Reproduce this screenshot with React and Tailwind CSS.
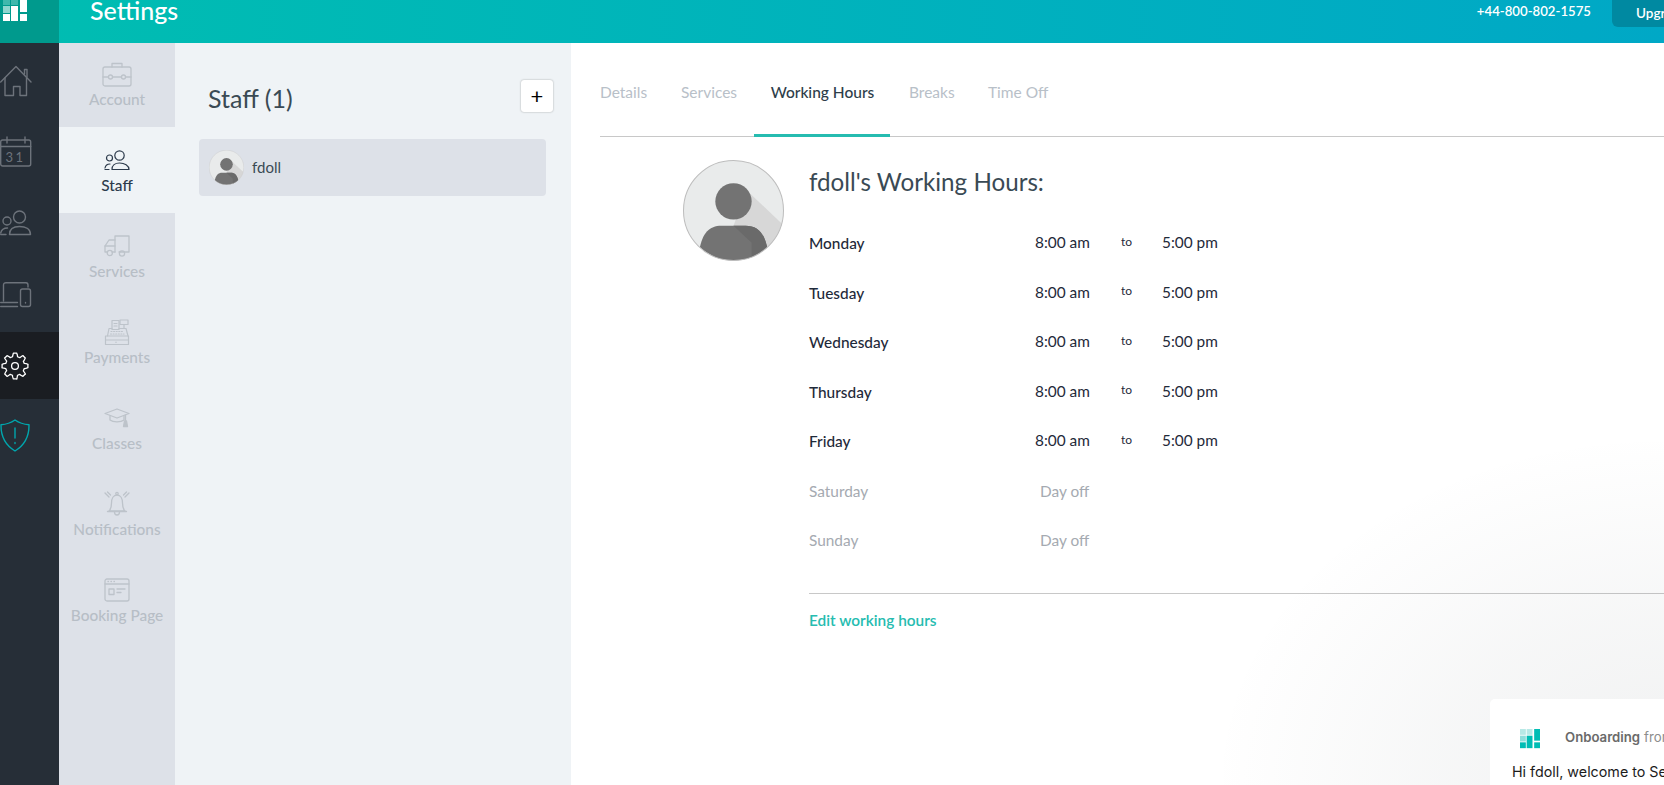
import React from "react";

const gearPath = (cx, cy, R, r, n) => {
  let d = "";
  for (let i = 0; i < n; i++) {
    const a = (i * 2 * Math.PI) / n - Math.PI / 2;
    const s = (2 * Math.PI) / n;
    const pts = [
      [R, a - s * 0.16],
      [R, a + s * 0.16],
      [r, a + s * 0.34],
      [r, a + s * 0.66],
    ];
    pts.forEach(([rad, t], j) => {
      const x = (cx + rad * Math.cos(t)).toFixed(2);
      const y = (cy + rad * Math.sin(t)).toFixed(2);
      d += i === 0 && j === 0 ? `M${x} ${y}` : j === 2 || j === 0 ? `Q${(cx + (rad + 1) * Math.cos(t)).toFixed(2)} ${(cy + (rad + 1) * Math.sin(t)).toFixed(2)} ${x} ${y}` : `L${x} ${y}`;
    });
  }
  return d + "Z";
};

const Logo = ({ w, main, light, mid }) => (
  <svg width={w} height={w} viewBox="0 0 24 24">
    <rect x="0" y="0" width="7" height="7" fill={light} />
    <rect x="8" y="0" width="7" height="7" fill={light} />
    <rect x="0" y="8" width="7" height="7" fill={mid} />
    <rect x="8" y="8" width="7" height="15" fill={main} />
    <rect x="0" y="16" width="7" height="7" fill={main} />
    <rect x="17" y="0" width="7" height="14" fill={main} />
    <rect x="17" y="16" width="7" height="7" fill={main} />
  </svg>
);

const S = ({ w, h, c, sw = 1.4, children }) => (
  <svg width={w} height={h} viewBox={`0 0 ${w} ${h}`} fill="none" stroke={c} strokeWidth={sw} strokeLinecap="round" strokeLinejoin="round">
    {children}
  </svg>
);

const Home = () => (
  <S w={32} h={32} c="#6d737b">
    <path d="M0.7 17L16 1.5L31 17" />
    <path d="M24.5 9V4.5H27V12" />
    <path d="M5 13V30.5H13.5V21.5H20V30.5H26.5V13" />
  </S>
);
const Calendar = () => (
  <S w={32} h={32} c="#6d737b">
    <rect x="0.7" y="4" width="30" height="26" rx="2" />
    <path d="M0.7 10.5H30.7M7 1V7M25 1V7" />
    <text x="15.5" y="26" textAnchor="middle" fill="#6d737b" stroke="none" fontSize="13" letterSpacing="2.5" fontFamily="Lato, sans-serif">31</text>
  </S>
);
const PeopleLarge = ({ c }) => (
  <S w={32} h={26} c={c}>
    <circle cx="19.5" cy="7" r="6" />
    <circle cx="7" cy="11" r="4" />
    <path d="M9.5 24.5C9.5 19 13.5 16.5 19.5 16.5C25.5 16.5 30.5 19 30.5 24.5H9.5Z" />
    <path d="M0.7 23C1.5 19.5 3.5 18 7.5 18" />
    <path d="M0.7 24.5H6" />
  </S>
);
const PeopleSmall = ({ c }) => (
  <S w={26} h={20} c={c} sw={1.2}>
    <circle cx="15.5" cy="5.5" r="4.7" />
    <circle cx="5.5" cy="8" r="3" />
    <path d="M8 19.5C8 15.5 11 13 15.5 13C20.5 13 25 15.5 25 19.5H8Z" />
    <path d="M1 18C1.5 15.5 3 14 6 14" />
    <path d="M1 19.5H5" />
  </S>
);
const Devices = () => (
  <S w={32} h={26} c="#6d737b">
    <path d="M3.5 19V3C3.5 1.5 4.5 0.7 6 0.7H26C27.5 0.7 28 1.5 28 3V5" />
    <path d="M0.7 20.5H17.5M0.7 24.5H17.5" />
    <rect x="20.5" y="7" width="10" height="17.5" rx="2" />
    <path d="M25.5 20.5V21" />
  </S>
);
const Gear = () => (
  <svg width="28" height="28" viewBox="0 0 28 28" fill="none" stroke="#ffffff" strokeWidth="1.3" strokeLinejoin="round">
    <path d={gearPath(14, 14, 13, 9.6, 8)} />
    <circle cx="14" cy="14" r="3.4" />
  </svg>
);
const Shield = () => (
  <S w={30} h={33} c="#00a6ad">
    <path d="M15 1C11 3.8 6 5.4 1 5.8C0.8 17 5 26 15 32C25 26 29.2 17 29 5.8C24 5.4 19 3.8 15 1Z" />
    <path d="M15 9V19M15 23.5V24.5" />
  </S>
);

const G = "#bdc3ca";
const Briefcase = () => (
  <S w={30} h={25} c={G} sw={1.3}>
    <rect x="1" y="5" width="28" height="19" rx="2" />
    <path d="M10 5V1.5H20V5" />
    <path d="M1 15H6.5M10.5 15H19.5M23.5 15H29" />
    <circle cx="8.5" cy="15" r="2" />
    <circle cx="21.5" cy="15" r="2" />
  </S>
);
const Truck = () => (
  <S w={26} h={22} c={G} sw={1.3}>
    <path d="M11 17V1H25V17H15" />
    <path d="M11 5H5L1 11V17H3.5" />
    <path d="M1 11H11" />
    <path d="M8 17H11" />
    <circle cx="5.8" cy="18" r="2.6" />
    <circle cx="18" cy="18.5" r="2.6" />
  </S>
);
const Register = () => (
  <S w={26} h={27} c={G} sw={1.2}>
    <rect x="8" y="1.5" width="7" height="9" />
    <path d="M10 4.5H13M10 7H13" />
    <rect x="16" y="1" width="8" height="4.5" />
    <path d="M20 5.5V9" />
    <path d="M3.5 17L5 9.5H8M15 9.5H22L24 17" />
    <path d="M7 12.5H19M6.5 15H20" strokeDasharray="1 1.6" />
    <path d="M1.5 17H24.5V25.5H1.5V17Z" />
    <path d="M1.5 21H24.5M12 23V23.4" />
  </S>
);
const Cap = () => (
  <S w={26} h={20} c={G} sw={1.3}>
    <path d="M1 5.5L13 1L25 5.5L13 10Z" />
    <path d="M6 8V12C9 14.5 17 14.5 20 12V8" />
    <path d="M21.5 7V13" />
    <path d="M20.5 13H22.5L23.5 18.5H19.5Z" fill={G} />
  </S>
);
const Bell = () => (
  <S w={26} h={26} c={G} sw={1.3}>
    <path d="M5 20C7 18 7.5 16 7.5 12C7.5 7.5 9.5 4 13 4C16.5 4 18.5 7.5 18.5 12C18.5 16 19 18 21 20Z" />
    <path d="M3.5 20.5H22.5" />
    <path d="M10.5 21C10.5 25 15.5 25 15.5 21" />
    <circle cx="13" cy="2.6" r="1.2" />
    <path d="M1 2L5 6M3.5 1L6.5 4M25 2L21 6M22.5 1L19.5 4" />
  </S>
);
const Booking = () => (
  <S w={26} h={24} c={G} sw={1.3}>
    <rect x="1" y="1" width="24" height="22" rx="2" />
    <path d="M1 6H25" />
    <path d="M4 3.5H4.4M7 3.5H7.4M10 3.5H10.4" />
    <rect x="5" y="11" width="5" height="5.5" />
    <path d="M13 11H21M13 14.5H17" />
  </S>
);

const Avatar = ({ size, border }) => (
  <svg width={size} height={size} viewBox="0 0 100 100" className="shrink-0">
    <defs>
      <clipPath id={`av${size}`}>
        <circle cx="50" cy="50" r="49.5" />
      </clipPath>
    </defs>
    <g clipPath={`url(#av${size})`}>
      <rect width="100" height="100" fill="#e9ebeb" />
      <path d="M63 30L98 63V100H60L50 65Z" fill="#d7d7d7" />
      <circle cx="50" cy="41" r="18" fill="#737373" />
      <path d="M16 90C19 72 26 65 38 65H62C74 65 81 72 84 90V102H16Z" fill="#737373" />
      <path d="M50 65H62C74 65 81 72 84 90V102H68V82Z" fill="#6a6a6a" />
    </g>
    <circle cx="50" cy="50" r="49.5" fill="none" stroke={border} strokeWidth="1" />
  </svg>
);

const nav = [
  ["Account", <Briefcase />],
  ["Staff", <PeopleSmall c="#2c3a4b" />, true],
  ["Services", <Truck />],
  ["Payments", <Register />],
  ["Classes", <Cap />],
  ["Notifications", <Bell />],
  ["Booking Page", <Booking />],
];

const days = [
  ["Monday", true],
  ["Tuesday", true],
  ["Wednesday", true],
  ["Thursday", true],
  ["Friday", true],
  ["Saturday", false],
  ["Sunday", false],
];

export default function App() {
  return (
    <div className="relative flex h-screen w-[1664px] flex-col overflow-hidden bg-white font-['Lato',sans-serif]">
      <header className="flex h-[43px] shrink-0 overflow-hidden bg-gradient-to-r from-[#00bdb1] to-[#00a8c6]">
        <div className="w-[59px] shrink-0 bg-[#009a8d] pl-[3px]">
          <div className="-mt-[2px]">
            <Logo w={24} main="#ffffff" light="#3fb8ad" mid="#8fd6cf" />
          </div>
        </div>
        <h1 className="-mt-[6px] ml-[31px] text-[25px] font-medium leading-[32px] text-white">Settings</h1>
        <div className="ml-auto -mr-[60px] flex items-start">
          <span className="mt-[1px] text-[13.2px] font-semibold leading-[20px] text-white">+44-800-802-1575</span>
          <div className="ml-[21px] flex h-[27px] w-[112px] items-center rounded-bl-[6px] bg-[#0089a1] pl-[24px] text-[13.5px] font-semibold text-white">
            Upgrade
          </div>
        </div>
      </header>

      <div className="flex min-h-0 flex-1">
        <aside className="flex w-[59px] shrink-0 flex-col bg-[#262e37] pt-[2px]">
          <div className="flex h-[71px] items-center"><Home /></div>
          <div className="flex h-[71px] items-center"><Calendar /></div>
          <div className="flex h-[72px] items-center"><PeopleLarge c="#6d737b" /></div>
          <div className="flex h-[71px] items-center"><Devices /></div>
          <div className="mb-[1px] mt-[2px] flex h-[67px] items-center bg-[#1a1d22] pl-[1px]"><Gear /></div>
          <div className="flex h-[71px] items-center"><Shield /></div>
        </aside>

        <nav className="w-[116px] shrink-0 bg-[#dde1e8]">
          {nav.map(([label, icon, active], i) => (
            <div
              key={label}
              className={`flex h-[86px] flex-col items-center ${i === 0 ? "-mt-[2px]" : ""} ${active ? "bg-[#eff3f6] text-[#2c3a4b]" : "text-[#b7bec6]"}`}
            >
              <div className="mt-[18px] flex h-[30px] items-center justify-center">{icon}</div>
              <span className="text-[15.4px] font-medium leading-[20px]">{label}</span>
            </div>
          ))}
        </nav>

        <section className="w-[396px] shrink-0 bg-[#eff3f6]">
          <div className="flex h-[96px] items-start justify-between pl-[33px] pr-[18px]">
            <h2 className="mt-[39px] text-[25px] leading-[32px] text-[#3a4a54]">Staff (1)</h2>
            <button className="mt-[37px] flex h-[32px] w-[32px] items-center justify-center rounded-[3px] bg-white text-[22px] leading-none text-black shadow-[0_0_2px_rgba(0,0,0,0.35)]">
              +
            </button>
          </div>
          <div className="ml-[24px] flex h-[57px] w-[347px] items-center rounded-[4px] bg-[#dde1e8] pl-[10px]">
            <Avatar size={35} border="#c2c2c2" />
            <span className="ml-[8px] text-[15px] text-[#3a4a54]">fdoll</span>
          </div>
        </section>

        <main className="min-w-0 flex-1 pl-[29px]">
          <div className="flex h-[94px] border-b border-[#c8c8c8] text-[15.5px] text-[#b8c0c8]">
            <div className="flex w-[81px] items-center pt-[7px]">Details</div>
            <div className="flex w-[73px] items-center pt-[7px]">Services</div>
            <div className="-mb-px mr-[19px] flex w-[136px] items-center justify-center border-b-[3px] border-[#26bcb0] pl-[1px] pt-[9px] font-medium text-[#2e3e4a]">
              Working Hours
            </div>
            <div className="flex w-[79px] items-center pt-[7px]">Breaks</div>
            <div className="flex items-center pt-[7px]">Time Off</div>
          </div>
          <div className="flex pl-[83px] pt-[23px]">
            <Avatar size={101} border="#bdbdbd" />
            <div className="ml-[25px] min-w-0 flex-1">
              <h3 className="text-[24.2px] leading-[44px] text-[#3a4a54]">fdoll's Working Hours:</h3>
              <div className="mt-[15px]">
                {days.map(([d, on]) => (
                  <div key={d} className="flex h-[49.5px] items-center text-[15.4px]">
                    <span className={`w-[216px] ${on ? "font-medium text-[#1f2a3a]" : "text-[#a5aab1]"}`}>{d}</span>
                    {on ? (
                      <>
                        <span className="-mt-[2px] w-[96px] pl-[10px] text-[#1f2a3a]">8:00 am</span>
                        <span className="-mt-[4px] w-[41px] text-[12px] text-[#1f2a3a]">to</span>
                        <span className="-mt-[2px] text-[#1f2a3a]">5:00 pm</span>
                      </>
                    ) : (
                      <span className="w-[96px] pl-[15px] text-[#a5aab1]">Day off</span>
                    )}
                  </div>
                ))}
              </div>
              <div className="mt-[27px] border-t border-[#c8c8c8] pt-[15px] text-[15.4px] font-semibold leading-[22px] text-[#26bcb0]">
                Edit working hours
              </div>
            </div>
          </div>
        </main>
      </div>

      <div className="pointer-events-none absolute left-[1214px] top-[435px] h-[700px] w-[900px] rounded-full bg-[radial-gradient(closest-side,rgba(90,100,105,0.09),rgba(90,100,105,0.05)_50%,rgba(90,100,105,0)_100%)]" />
      <div className="absolute left-[1490px] top-[699px] h-[120px] w-[360px] rounded-[5px] bg-white pl-[22px] pt-[29px] font-['Inter',sans-serif]">
        <div className="flex h-[20px] items-center">
          <div className="ml-[8px] mt-[1px]">
            <Logo w={20} main="#00bdb4" light="#b8e9e6" mid="#8fdedb" />
          </div>
          <span className="ml-[25px] text-[13.2px] font-semibold text-[#6a6a6a]">Onboarding</span>
          <span className="ml-[4px] text-[13.2px] text-[#8d8d8d]">from Setmore</span>
        </div>
        <p className="mt-[13px] text-[14.3px] text-[#1c1c1c]">Hi fdoll, welcome to Setmore!</p>
      </div>
    </div>
  );
}
